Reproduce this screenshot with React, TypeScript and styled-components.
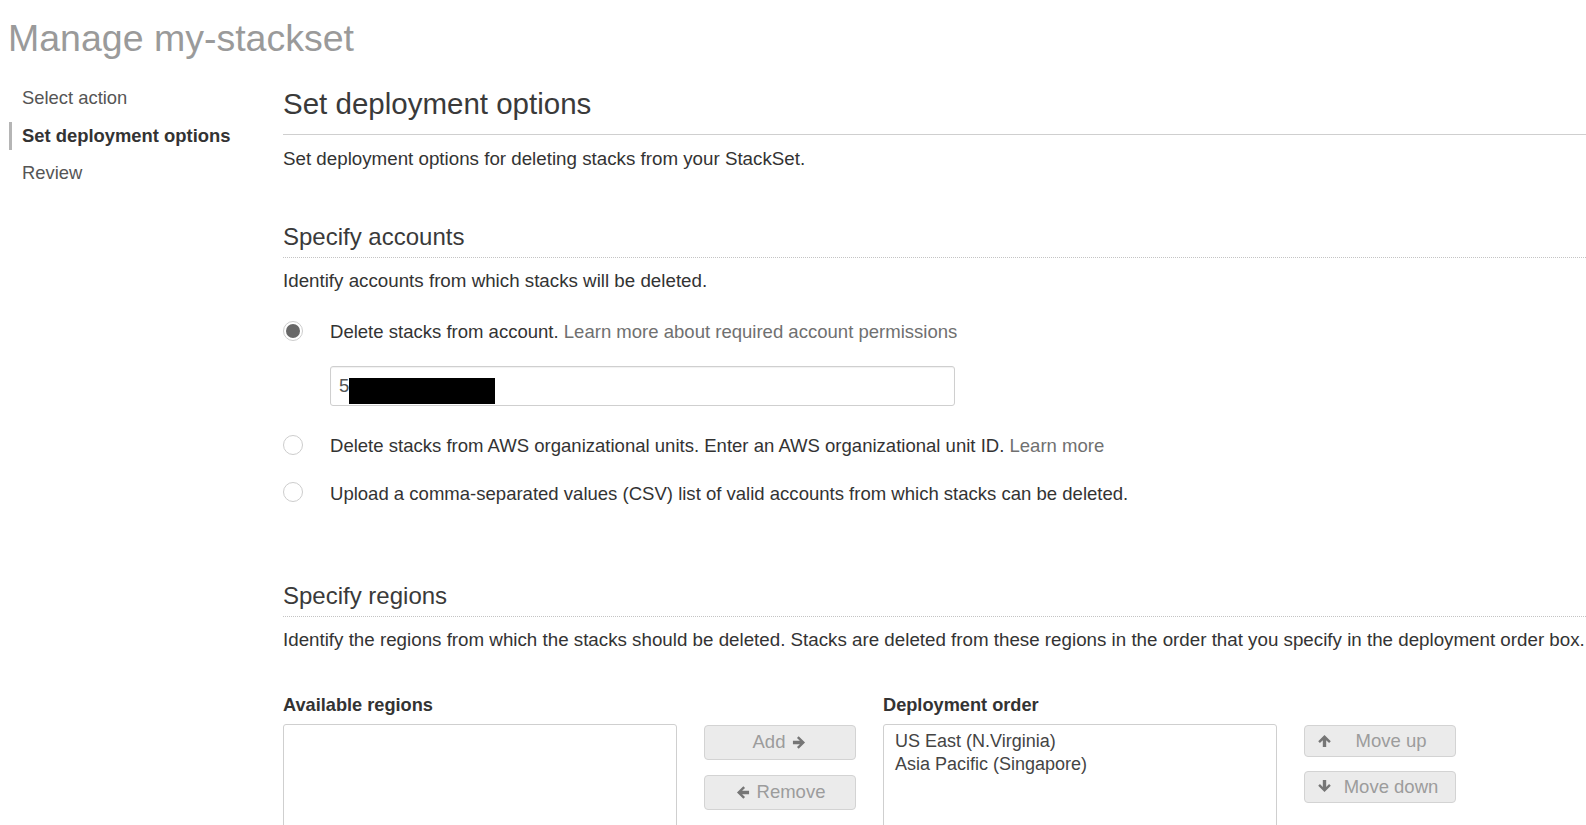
import React from "react";
import styled, { createGlobalStyle } from "styled-components";

const Global = createGlobalStyle`
  html, body { margin: 0; padding: 0; background: #fff; }
  body {
    font-family: "Liberation Sans", Arial, Helvetica, sans-serif;
    color: #333;
    overflow: hidden;
  }
  * { box-sizing: border-box; }
`;

const Page = styled.div`
  width: 1586px;
  height: 825px;
  overflow: hidden;
`;

const Title = styled.h1`
  margin: 0;
  padding: 16px 0 0 8px;
  font-size: 37.5px;
  line-height: 44px;
  font-weight: normal;
  color: #9a9a9a;
`;

const Body = styled.div`
  display: flex;
  margin-top: 24px;
  padding-left: 9px;
`;

const Sidebar = styled.nav`
  width: 274px;
  flex: none;
  display: flex;
  flex-direction: column;
  gap: 9.5px;
`;

const NavItem = styled.div<{ $active?: boolean }>`
  border-left: 3px solid ${(p) => (p.$active ? "#b5b5b5" : "transparent")};
  padding-left: 10px;
  font-size: 18.4px;
  line-height: 28px;
  font-weight: ${(p) => (p.$active ? "bold" : "normal")};
  color: ${(p) => (p.$active ? "#333" : "#555")};
`;

const Main = styled.main`
  flex: 1;
  min-width: 0;
`;

const PageHeading = styled.h2`
  margin: 2px 0 0;
  padding-bottom: 12px;
  font-size: 29.5px;
  line-height: 36px;
  font-weight: normal;
  color: #3a3a3a;
  border-bottom: 1px solid #cfcfcf;
`;

const SectionHeading = styled.h3<{ $top: number }>`
  margin: ${(p) => p.$top}px 0 0;
  padding-bottom: 5px;
  font-size: 24px;
  line-height: 30px;
  font-weight: normal;
  color: #3a3a3a;
  border-bottom: 1px dotted #c4c4c4;
`;

const Text = styled.p<{ $top: number }>`
  margin: ${(p) => p.$top}px 0 0;
  font-size: 18.75px;
  line-height: 22px;
  color: #333;
  white-space: nowrap;
`;

const Link = styled.span`
  color: #707070;
`;

const RadioRow = styled.label<{ $top: number }>`
  display: flex;
  align-items: center;
  gap: 27px;
  margin-top: ${(p) => p.$top}px;
  font-size: 18.55px;
  line-height: 22px;
  color: #333;
  white-space: nowrap;
`;

const Radio = styled.span<{ $checked?: boolean }>`
  width: 20px;
  height: 20px;
  flex: none;
  border-radius: 50%;
  border: 1px solid #cdcdcd;
  background: #fff;
  display: flex;
  align-items: center;
  justify-content: center;
  margin-top: -3px;
  &::after {
    content: "";
    width: 14px;
    height: 14px;
    border-radius: 50%;
    background: ${(p) => (p.$checked ? "#686868" : "transparent")};
  }
`;

const FakeInput = styled.div`
  margin: 23px 0 0 47px;
  width: 625px;
  height: 40px;
  border: 1px solid #cfcfcf;
  border-radius: 3px;
  box-shadow: inset 0 1px 1px rgba(0, 0, 0, 0.06);
  display: flex;
  align-items: center;
  padding-left: 8px;
  font-size: 18.5px;
  color: #555;
`;

const Redaction = styled.span`
  display: inline-block;
  width: 146px;
  height: 26px;
  background: #000;
  margin-top: 10px;
`;

const Lists = styled.div`
  display: flex;
  gap: 27px;
  margin-top: 43px;
`;

const ListCol = styled.div`
  width: 394px;
  flex: none;
`;

const Label = styled.div`
  font-size: 18.2px;
  line-height: 22px;
  font-weight: bold;
  color: #333;
  margin-bottom: 8px;
`;

const ListBox = styled.div`
  height: 160px;
  border: 1px solid #cfcfcf;
  border-radius: 3px;
  padding: 5px 12px 5px 11px;
  font-size: 18px;
  line-height: 23px;
  color: #444;
`;

const ButtonCol = styled.div<{ $gap: number }>`
  width: 152px;
  flex: none;
  padding-top: 31px;
  display: flex;
  flex-direction: column;
  gap: ${(p) => p.$gap}px;
`;

const Button = styled.button<{ $h: number }>`
  height: ${(p) => p.$h}px;
  width: 100%;
  display: flex;
  align-items: center;
  justify-content: center;
  gap: 7px;
  padding: 0 12px;
  border: 1px solid #d3d3d3;
  border-radius: 4px;
  background: #ebebeb;
  color: #9c9c9c;
  font-family: "Liberation Sans", Arial, Helvetica, sans-serif;
  font-size: 18.5px;
  cursor: default;
  svg {
    flex: none;
  }
`;

const ButtonText = styled.span`
  flex: 1;
  text-align: center;
`;

type Dir = "right" | "left" | "up" | "down";
const rot: Record<Dir, number> = { right: 0, down: 90, left: 180, up: 270 };

function Arrow({ dir }: { dir: Dir }) {
  return (
    <svg width="15" height="15" viewBox="0 0 16 16" aria-hidden="true">
      <path
        transform={`rotate(${rot[dir]} 8 8)`}
        d="M1 6.2 H8.4 L5.3 3.1 L7.1 1.3 L13.9 8 L7.1 14.7 L5.3 12.9 L8.4 9.8 H1 Z"
        fill="#767676"
      />
    </svg>
  );
}

export default function App() {
  return (
    <Page>
      <Global />
      <Title>Manage my-stackset</Title>
      <Body>
        <Sidebar>
          <NavItem>Select action</NavItem>
          <NavItem $active>Set deployment options</NavItem>
          <NavItem>Review</NavItem>
        </Sidebar>
        <Main>
          <PageHeading>Set deployment options</PageHeading>
          <Text $top={13}>Set deployment options for deleting stacks from your StackSet.</Text>

          <SectionHeading $top={52}>Specify accounts</SectionHeading>
          <Text $top={12}>Identify accounts from which stacks will be deleted.</Text>

          <RadioRow $top={29}>
            <Radio $checked />
            <span>
              Delete stacks from account. <Link>Learn more about required account permissions</Link>
            </span>
          </RadioRow>
          <FakeInput>
            5<Redaction />
          </FakeInput>
          <RadioRow $top={29}>
            <Radio />
            <span>
              Delete stacks from AWS organizational units. Enter an AWS organizational unit ID.{" "}
              <Link>Learn more</Link>
            </span>
          </RadioRow>
          <RadioRow $top={25.5}>
            <Radio />
            <span>Upload a comma-separated values (CSV) list of valid accounts from which stacks can be deleted.</span>
          </RadioRow>

          <SectionHeading $top={76}>Specify regions</SectionHeading>
          <Text $top={12}>
            Identify the regions from which the stacks should be deleted. Stacks are deleted from these regions in the order that you specify in the deployment order box.
          </Text>

          <Lists>
            <ListCol>
              <Label>Available regions</Label>
              <ListBox />
            </ListCol>
            <ButtonCol $gap={15}>
              <Button $h={35}>
                Add <Arrow dir="right" />
              </Button>
              <Button $h={35}>
                <Arrow dir="left" /> Remove
              </Button>
            </ButtonCol>
            <ListCol>
              <Label>Deployment order</Label>
              <ListBox>
                <div>US East (N.Virginia)</div>
                <div>Asia Pacific (Singapore)</div>
              </ListBox>
            </ListCol>
            <ButtonCol $gap={14}>
              <Button $h={32}>
                <Arrow dir="up" />
                <ButtonText>Move up</ButtonText>
              </Button>
              <Button $h={32}>
                <Arrow dir="down" />
                <ButtonText>Move down</ButtonText>
              </Button>
            </ButtonCol>
          </Lists>
        </Main>
      </Body>
    </Page>
  );
}
